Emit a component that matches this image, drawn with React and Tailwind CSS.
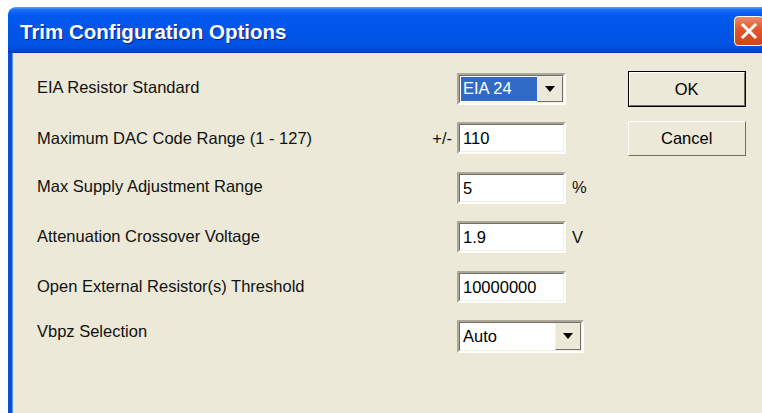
import React from 'react';

const font = { fontFamily: '"Liberation Sans", Arial, sans-serif' };

// classic sunken 3D edit frame
const Sunken = ({ className = '', children }) => (
  <div className={`border-2 border-t-[#aca899] border-l-[#aca899] border-b-white border-r-white ${className}`}>
    <div className="h-full w-full border border-t-[#716f64] border-l-[#716f64] border-b-[#f1efe2] border-r-[#f1efe2] bg-white flex items-center">
      {children}
    </div>
  </div>
);

const DropButton = () => (
  <div className="h-full w-[26px] bg-[#ece9d8] border border-t-[#f1efe2] border-l-[#f1efe2] border-b-[#716f64] border-r-[#716f64] flex items-center justify-center">
    <svg width="10" height="6" viewBox="0 0 10 6">
      <path d="M0 0h10L5 6z" fill="#000" />
    </svg>
  </div>
);

const TextField = ({ value }) => (
  <Sunken className="w-[109px] h-[32px]">
    <span className="pl-[3px] text-[16.5px] text-black leading-none">{value}</span>
  </Sunken>
);

const Row = ({ label, prefix, unit, children, labelShift = '' }) => (
  <div className="h-[49.5px] flex items-center">
    <div className={`w-[386px] text-[16.5px] text-[#111] ${labelShift}`}>{label}</div>
    <div className="w-[34px] text-right pr-[5px] text-[16.5px] text-[#111]">{prefix}</div>
    {children}
    {unit && <div className="pl-[6px] text-[16.5px] text-[#111]">{unit}</div>}
  </div>
);

const XpButton = ({ label, isDefault }) => (
  <div className={`w-[118px] flex items-center justify-center text-[16.5px] text-black bg-[#ece9d8] ${isDefault ? 'h-[36px] border border-black' : 'h-[35px]'}`}>
    <div className="w-full h-full border border-t-white border-l-white border-b-[#716f64] border-r-[#716f64] flex items-center justify-center">
      {label}
    </div>
  </div>
);

export default function App() {
  return (
    <div className="w-[762px] h-[413px] bg-white overflow-hidden pt-[7px] pl-[8px]" style={font}>
      <div className="w-[770px] h-[420px] flex flex-col">
        {/* title bar */}
        <div className="h-[46px] rounded-tl-[8px] bg-[linear-gradient(to_bottom,#5aa4ff_0%,#1a6ef5_6%,#0059ef_18%,#0055e8_50%,#0053e3_82%,#0048d6_94%,#0039b0_100%)] flex items-center pl-[12px] pr-[14px]">
          <div className="flex-1 text-white font-bold text-[20.5px] mt-[4px] [text-shadow:1px_1px_0_#0a1e8a]">
            Trim Configuration Options
          </div>
          <div className="w-[30px] h-[30px] rounded-[4px] border border-white bg-[linear-gradient(to_bottom,#ea8d6a_0%,#e2582f_40%,#cf4418_100%)] flex items-center justify-center mt-[2px]">
            <svg width="18" height="18" viewBox="0 0 18 18">
              <path d="M3 3L15 15M15 3L3 15" stroke="#fff" strokeWidth="3" strokeLinecap="square" />
            </svg>
          </div>
        </div>

        {/* client area */}
        <div className="flex-1 flex border-l-4 border-l-[#0a4fd8] bg-[#ece9d8]">
          <div className="w-[1px] bg-[#5e95f5]" />
          <div className="flex-1 flex pt-[11px] pl-[24px]">
            <div className="flex flex-col">
              <Row label="EIA Resistor Standard" labelShift="-mt-[3px]">
                <Sunken className="w-[109px] h-[32px]">
                  <div className="flex h-full w-full items-center">
                    <div className="flex-1 h-full py-[1px] pl-[1px]">
                      <div className="h-full bg-[#316ac5] text-white text-[16.5px] flex items-center pl-[2px]">EIA 24</div>
                    </div>
                    <DropButton />
                  </div>
                </Sunken>
              </Row>
              <Row label="Maximum DAC Code Range (1 - 127)" prefix="+/-">
                <TextField value="110" />
              </Row>
              <Row label="Max Supply Adjustment Range" unit="%" labelShift="-mt-[3px]">
                <TextField value="5" />
              </Row>
              <Row label="Attenuation Crossover Voltage" unit="V" labelShift="-mt-[1px]">
                <TextField value="1.9" />
              </Row>
              <Row label="Open External Resistor(s) Threshold" labelShift="-mt-[1px]">
                <TextField value="10000000" />
              </Row>
              <Row label="Vbpz Selection" labelShift="-mt-[9px]">
                <Sunken className="w-[127px] h-[33px]">
                  <div className="flex h-full w-full items-center">
                    <div className="flex-1 pl-[3px] text-[16.5px] text-black">Auto</div>
                    <DropButton />
                  </div>
                </Sunken>
              </Row>
            </div>
            <div className="flex flex-col gap-[14px] pl-[41px] pt-[7px]">
              <XpButton label="OK" isDefault />
              <XpButton label="Cancel" />
            </div>
          </div>
        </div>
      </div>
    </div>
  );
}
